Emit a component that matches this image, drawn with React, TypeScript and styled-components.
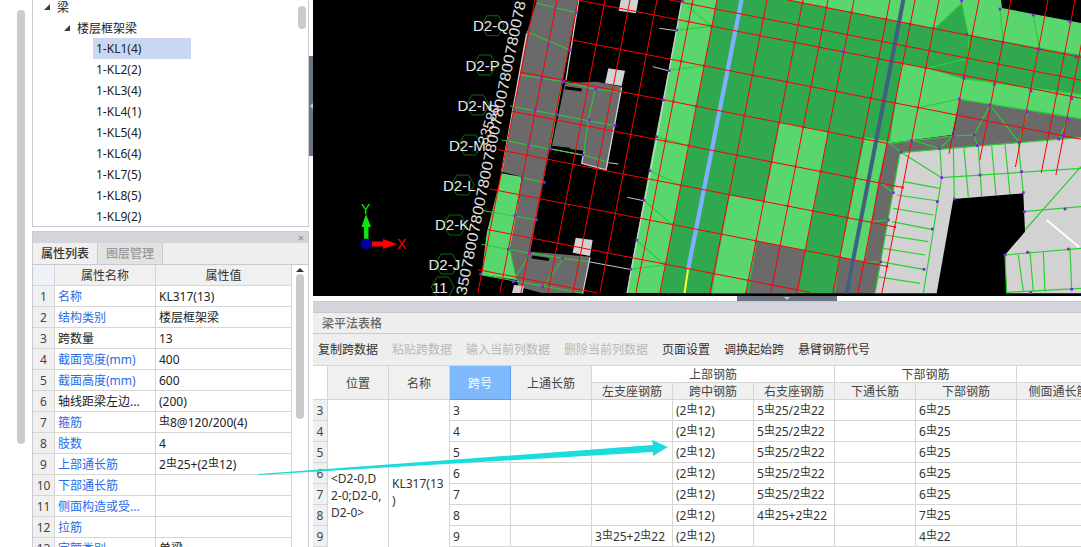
import React from "react";
import styled, { createGlobalStyle } from "styled-components";

const Global = createGlobalStyle`
  html, body { margin: 0; padding: 0; background: #fff; overflow: hidden; }
`;

const Page = styled.div`
  position: relative;
  display: flex;
  width: 1081px;
  height: 547px;
  overflow: hidden;
  background: #fff;
  font-family: "Noto Sans", "Noto Sans CJK SC", sans-serif;
  font-size: 12px;
  color: #222;
`;

const Rail = styled.div`
  flex: 0 0 32px;
  padding: 10px 7px 0 17px;
  box-sizing: border-box;
`;
const RailThumb = styled.div`
  width: 8px;
  height: 434px;
  background: #cbcbcb;
  border-radius: 4px;
`;
const LeftColumn = styled.div`
  flex: 0 0 277px;
  display: flex;
  flex-direction: column;
  gap: 4px;
`;
const TreePanel = styled.div`
  position: relative;
  height: 227px;
  box-sizing: border-box;
  border: 1px solid #c9c9cf;
  border-top: 0;
  overflow: hidden;
`;
const TreeList = styled.div`
  display: flex;
  flex-direction: column;
  margin-top: -4px;
`;
const TreeRow = styled.div<{ $depth: number }>`
  display: flex;
  align-items: center;
  gap: 7px;
  height: 21px;
  padding-left: ${(p) => 11 + p.$depth * 20}px;
`;
const Wedge = styled.span`
  width: 0;
  height: 0;
  border-left: 6px solid transparent;
  border-bottom: 6px solid #3c3c3c;
`;
const Leaf = styled.div<{ $selected?: boolean }>`
  width: 98px;
  height: 21px;
  line-height: 21px;
  margin-left: 60px;
  padding-left: 3px;
  box-sizing: border-box;
  background: ${(p) => (p.$selected ? "#c9d8f0" : "transparent")};
`;
const TreeThumb = styled.div`
  position: absolute;
  top: 6px;
  right: 2px;
  width: 8px;
  height: 23px;
  border-radius: 4px;
  background: #cbcbcb;
`;
const PropPanel = styled.div`
  flex: 1;
  display: flex;
  flex-direction: column;
  box-sizing: border-box;
  border: 1px solid #c9c9cf;
  border-bottom: 0;
  overflow: hidden;
`;
const PanelBar = styled.div`
  display: flex;
  align-items: center;
  justify-content: flex-end;
  height: 11px;
  padding-right: 4px;
  background: #d4d5da;
  color: #8b8b8b;
  font-size: 11px;
  line-height: 11px;
`;
const Tabs = styled.div`
  display: flex;
  height: 22px;
  background: #eee;
  border-bottom: 1px solid #c9c9cf;
  box-sizing: border-box;
`;
const Tab = styled.div<{ $active?: boolean }>`
  width: 65px;
  line-height: 21px;
  text-align: center;
  box-sizing: border-box;
  border-right: 1px solid #c9c9cf;
  background: ${(p) => (p.$active ? "#f0f0f0" : "#e2e2e2")};
  color: ${(p) => (p.$active ? "#333" : "#999")};
  font-weight: 500;
`;
const PropBody = styled.div`
  display: flex;
  flex: 1;
  overflow: hidden;
`;
const PropGrid = styled.div`
  display: grid;
  grid-template-columns: 22px 101px 136px;
  grid-auto-rows: 21px;
  flex: 0 0 259px;
`;
const PropHead = styled.div<{ $corner?: boolean }>`
  display: flex;
  align-items: center;
  justify-content: center;
  box-sizing: border-box;
  border-right: 1px solid #d6d6d6;
  border-bottom: 1px solid #d6d6d6;
  background: ${(p) => (p.$corner ? "#eef2f8" : "#f0f0f0")};
  color: #333;
`;
const PropIndex = styled(PropHead)`
  background: #f0f0f0;
  font-size: 12px;
  color: #444;
`;
const PropCell = styled.div<{ $link?: boolean }>`
  padding-left: 3px;
  line-height: 21px;
  white-space: nowrap;
  overflow: hidden;
  box-sizing: border-box;
  border-right: 1px solid #d6d6d6;
  border-bottom: 1px solid #d6d6d6;
  color: ${(p) => (p.$link ? "#2a6be8" : "#222")};
`;
const PropScroll = styled.div`
  position: relative;
  flex: 1;
`;
const ScrollUp = styled.div`
  position: absolute;
  top: 3px;
  left: 4px;
  width: 0;
  height: 0;
  border-left: 4px solid transparent;
  border-right: 4px solid transparent;
  border-bottom: 4px solid #333;
`;
const ScrollThumb = styled.div`
  position: absolute;
  top: 9px;
  left: 4px;
  width: 8px;
  height: 145px;
  border-radius: 4px;
  background: #cbcbcb;
`;
const Gutter = styled.div`
  position: relative;
  flex: 0 0 4px;
`;
const GutterHandle = styled.div`
  position: absolute;
  top: 56px;
  left: 0;
  width: 4px;
  height: 100px;
  background: #6b7583;
  &::after {
    content: "";
    position: absolute;
    top: 47px;
    left: 1px;
    border-top: 3px solid transparent;
    border-bottom: 3px solid transparent;
    border-right: 3px solid #c4c8ce;
  }
`;
const RightColumn = styled.div`
  flex: 1;
  display: flex;
  flex-direction: column;
  min-width: 0;
`;
const CanvasFrame = styled.div`
  height: 296px;
  background: #000;
  overflow: hidden;
`;
const Splitter = styled.div`
  height: 5px;
  padding-left: 424px;
  background: #fff;
`;
const SplitHandle = styled.div`
  position: relative;
  width: 100px;
  height: 5px;
  background: #6b7583;
  &::after {
    content: "";
    position: absolute;
    top: 1px;
    left: 47px;
    border-left: 3px solid transparent;
    border-right: 3px solid transparent;
    border-top: 3px solid #c4c8ce;
  }
`;
const BottomPanel = styled.div`
  flex: 1;
  display: flex;
  flex-direction: column;
  overflow: hidden;
`;
const BottomBar = styled.div`
  height: 10px;
  background: #d4d5da;
  border-top: 1px solid #c9c9cf;
`;
const TitleBar = styled.div`
  height: 22px;
  line-height: 22px;
  padding-left: 9px;
  background: #eee;
  border-top: 1px solid #c9c9cf;
  border-bottom: 1px solid #c9c9cf;
  color: #666;
  font-weight: 500;
  box-sizing: border-box;
`;
const Toolbar = styled.div`
  display: flex;
  gap: 14px;
  height: 31px;
  line-height: 31px;
  padding-left: 5px;
  background: #eee;
  box-sizing: border-box;
`;
const Tool = styled.span<{ $disabled?: boolean }>`
  color: ${(p) => (p.$disabled ? "#b8b8b8" : "#333")};
`;
const BeamGrid = styled.div`
  display: grid;
  grid-template-columns: 15px 61px 61px 61px 81px 81px 81px 81px 81px 101px 84px;
  grid-template-rows: 17px 17px repeat(7, 21px);
  width: 768px;
  overflow: hidden;
  background: #fff;
  border-top: 1px solid #d6d6d6;
`;
const Head = styled.div<{ $col: string; $row: string; $accent?: boolean; $plain?: boolean }>`
  grid-column: ${(p) => p.$col};
  grid-row: ${(p) => p.$row};
  display: flex;
  align-items: center;
  justify-content: center;
  white-space: nowrap;
  box-sizing: border-box;
  border-right: 1px solid ${(p) => (p.$accent ? "#5ba0f0" : "#d6d6d6")};
  border-bottom: 1px solid ${(p) => (p.$accent ? "#5ba0f0" : "#d6d6d6")};
  background: ${(p) => (p.$accent ? "#7fb8fb" : p.$plain ? "#fff" : "#f0f0f0")};
  color: ${(p) => (p.$accent ? "#fff" : "#444")};
`;
const RowNo = styled.div<{ $row: number }>`
  grid-column: 1;
  grid-row: ${(p) => p.$row};
  display: flex;
  align-items: center;
  justify-content: center;
  background: #f0f0f0;
  color: #444;
  box-sizing: border-box;
  border-right: 1px solid #d6d6d6;
  border-bottom: 1px solid #d6d6d6;
`;
const Merged = styled.div<{ $col: number; $top: number }>`
  grid-column: ${(p) => p.$col};
  grid-row: 3 / 10;
  padding: ${(p) => p.$top}px 0 0 3px;
  line-height: 17px;
  white-space: nowrap;
  box-sizing: border-box;
  border-right: 1px solid #d6d6d6;
  color: #333;
`;
const Cell = styled.div<{ $row: number; $col: number }>`
  grid-column: ${(p) => p.$col};
  grid-row: ${(p) => p.$row};
  padding-left: 3px;
  line-height: 21px;
  white-space: nowrap;
  overflow: hidden;
  box-sizing: border-box;
  border-right: 1px solid #d6d6d6;
  border-bottom: 1px solid #d6d6d6;
  color: #333;
`;
const Bar = styled.span`
  font-size: 11px;
  position: relative;
  top: -2px;
  line-height: 1;
`;
const Arrow = styled.svg`
  position: absolute;
  left: 0;
  top: 0;
  pointer-events: none;
`;

const rebar = (s: string) =>
  s.split("#").map((part, i) => (
    <React.Fragment key={i}>
      {i > 0 && <Bar>虫</Bar>}
      {part}
    </React.Fragment>
  ));

const leaves = ["1-KL1(4)", "1-KL2(2)", "1-KL3(4)", "1-KL4(1)", "1-KL5(4)", "1-KL6(4)", "1-KL7(5)", "1-KL8(5)", "1-KL9(2)"];

const props: [string, string, boolean][] = [
  ["名称", "KL317(13)", true],
  ["结构类别", "楼层框架梁", true],
  ["跨数量", "13", false],
  ["截面宽度(mm)", "400", true],
  ["截面高度(mm)", "600", true],
  ["轴线距梁左边...", "(200)", false],
  ["箍筋", "#8@120/200(4)", true],
  ["肢数", "4", true],
  ["上部通长筋", "2#25+(2#12)", true],
  ["下部通长筋", "", true],
  ["侧面构造或受...", "", true],
  ["拉筋", "", true],
  ["定额类别", "单梁", true],
];

const beamRows: [string, string, string, string][] = [
  ["3", "", "5#25/2#22", "6#25"],
  ["4", "", "5#25/2#22", "6#25"],
  ["5", "", "5#25/2#22", "6#25"],
  ["6", "", "5#25/2#22", "6#25"],
  ["7", "", "5#25/2#22", "6#25"],
  ["8", "", "4#25+2#22", "7#25"],
  ["9", "3#25+2#22", "", "4#22"],
];

const tools: [string, boolean][] = [
  ["复制跨数据", false],
  ["粘贴跨数据", true],
  ["输入当前列数据", true],
  ["删除当前列数据", true],
  ["页面设置", false],
  ["调换起始跨", false],
  ["悬臂钢筋代号", false],
];

/* ---- CAD drawing ---- */
const K = 0.195;
const BOTTOM = 293;
const familyA: [number, number][] = [
  [535, BOTTOM], [557, BOTTOM], [578, BOTTOM], [605, BOTTOM], [630, BOTTOM], [657, BOTTOM], [693, BOTTOM],
  [717, BOTTOM], [767, BOTTOM], [803, BOTTOM], [828, BOTTOM], [854, BOTTOM], [890, BOTTOM], [915, BOTTOM],
  [939, BOTTOM], [979, 154], [1011, 160], [1048, 167], [1075, 173], [1090, 175],
];
const familyB: [number, number, number][] = [
  [-19, 787, 1081], [4, 669, 1081], [22, 580, 1081], [63, 572, 1081], [105, 520, 887], [146, 512, 903],
  [187, 498, 895], [228, 490, 888], [269, 487, 810], [311, 478, 597],
];
const crossings = () => {
  const out: [number, number][] = [];
  familyA.forEach(([a, end]) =>
    familyB.forEach(([b, s, e]) => {
      const y = (b + K * (a - 690)) / (1 + K * K);
      const x = a - K * y;
      if (x > 660 && x >= s && x <= e && y <= end && y > 0) out.push([x, y]);
    })
  );
  return out;
};

const GREEN = "#2ad02f";
type Seg = number[];
const Lines = ({ segs, color = GREEN, w = 3 }: { segs: Seg[]; color?: string; w?: number }) => (
  <>
    {segs.map((s, i) => (
      <polyline key={i} points={s.join(",")} fill="none" stroke={color} strokeWidth={w} />
    ))}
  </>
);
const Dots = ({ pts }: { pts: Seg[] }) => (
  <>
    {pts.map(([x, y], i) => (
      <rect key={i} x={x - 4} y={y - 4} width={8} height={8} fill="#8a1be8" />
    ))}
  </>
);

const z5Green: Seg[] = [
  [680, 10, 800, 38], [650, 95, 780, 150], [630, 225, 760, 245, 855, 268, 935, 275], [600, 318, 915, 377],
  [575, 420, 720, 447, 820, 465, 890, 485], [635, 533, 703, 547], [520, 632, 680, 660], [515, 733, 660, 760, 760, 775, 835, 785],
  [515, 825, 820, 880], [855, 270, 835, 360, 820, 465], [757, 245, 720, 447], [610, 845, 660, 760], [700, 860, 760, 775],
  [600, 750, 620, 840],
];
const z5Dots: Seg[] = [
  [735, 25], [800, 38], [715, 135], [780, 150], [695, 235], [760, 245], [857, 268], [675, 330], [742, 343], [838, 360], [915, 377],
  [655, 435], [720, 447], [818, 465], [637, 535], [703, 547], [615, 647], [680, 660], [595, 748], [660, 760], [758, 775], [610, 845],
  [698, 860], [512, 822], [1100, 90], [1077, 212], [1060, 300], [1040, 410], [1020, 512], [1002, 600], [980, 720], [962, 808], [1117, 3],
];
const z6Green: Seg[] = [
  [630, 458, 555, 880], [630, 458, 1173, 412], [755, 533, 1173, 505], [750, 445, 755, 533, 700, 880],
  [790, 440, 793, 595], [822, 445, 835, 590], [865, 440, 875, 588], [905, 438, 918, 585], [945, 432, 960, 582], [985, 430, 1000, 580],
  [640, 545, 750, 565], [620, 585, 745, 603], [610, 625, 730, 645], [605, 665, 725, 688], [585, 705, 715, 725], [580, 745, 705, 765],
  [570, 785, 700, 808], [560, 830, 690, 850], [1000, 635, 1173, 620], [945, 765, 1173, 745], [950, 877, 1173, 865],
  [985, 765, 1000, 875], [1020, 755, 1030, 875], [1060, 755, 1065, 875], [1140, 745, 1145, 870], [1005, 690, 1173, 500],
  [945, 765, 950, 880],
  [665, 420, 748, 445, 790, 408, 853, 405, 862, 437], [853, 405, 900, 315, 987, 427, 1012, 335], [1107, 417, 1133, 358],
  [600, 430, 633, 457, 755, 533], [570, 547, 610, 578], [547, 665, 595, 660], [523, 787, 572, 785],
  [735, 85, 815, 10, 835, 105, 835, 175], [930, 27, 940, 128], [1030, 45, 1048, 147], [710, 205, 833, 175], [690, 322, 808, 297],
  [815, 235, 1173, 285], [810, 298, 1173, 355], [938, 128, 1173, 165], [600, 430, 790, 408],
];
const z6Dots: Seg[] = [
  [815, 3], [930, 27], [1030, 45], [1140, 65], [1158, 170], [938, 128], [1048, 147], [830, 103], [460, 155], [822, 235], [913, 253],
  [1023, 273], [1145, 296], [808, 297], [900, 315], [1012, 335], [1133, 358], [853, 405], [790, 408], [862, 437], [987, 427], [1107, 417],
  [1120, 407], [748, 445], [665, 422], [633, 457], [755, 533], [870, 525], [995, 515], [610, 578], [742, 605], [595, 660], [727, 687],
  [572, 785], [702, 808], [1000, 578], [793, 597], [1003, 635], [1125, 627], [945, 765], [1013, 757], [1135, 747], [1022, 878], [1145, 868],
];

const gridLabels: [string, number, number, number, number][] = [
  ["D2-Q", 473, 31, 492.7, 25.7],
  ["D2-P", 465.5, 71, 485, 65],
  ["D2-N", 457.5, 111, 477.7, 105],
  ["D2-M", 449, 151, 470, 145],
  ["D2-L", 443, 191, 462.7, 185],
  ["D2-K", 435, 230, 455, 225],
  ["D2-J", 428.5, 270, 446.7, 264],
  ["11", 432, 293, 442.7, 287],
];
const hex = (cx: number, cy: number, r = 11.5) =>
  [0, 1, 2, 3, 4, 5]
    .map((i) => {
      const a = (Math.PI / 3) * i;
      return `${cx + r * Math.cos(a)},${cy + r * Math.sin(a)}`;
    })
    .join(" ");

const CadDrawing = () => (
  <svg width={768} height={296} viewBox="313 0 768 296" style={{ display: "block" }} fontFamily='"DejaVu Sans", sans-serif'>
    <rect x={313} y={0} width={768} height={296} fill="#000" />
    <g transform="translate(310,0) scale(0.33333)">
      <polygon fill="#5ad66e" points="575,520 635,530 620,650 600,750 620,840 515,825 530,700" />
      <polygon fill="#6a6a6a" points="678,10 680,0 805,0 697,560 660,760 600,750 628,590 635,530 575,515 650,100" />
      <polygon fill="#6a6a6a" points="765,250 860,245 935,260 890,510 815,490 822,452 725,440" />
      <polygon fill="#6a6a6a" points="600,750 840,770 815,879 695,879 625,860" />
      <polygon fill="#d2d2d2" points="895,205 945,212 935,258 885,250" />
      <polygon fill="#d2d2d2" points="932,0 985,0 978,40 926,32" />
      <polygon fill="#d2d2d2" points="797,713 848,720 840,768 788,758" />
      <polygon fill="#d2d2d2" points="612,855 642,858 638,879 606,879" />
      <rect x={765} y={262} width={50} height={9} fill="#000" transform="rotate(8 790 266)" />
      <rect x={726} y={440} width={54} height={11} fill="#000" transform="rotate(6 750 445)" />
      <rect x={665} y={770} width={52} height={9} fill="#000" transform="rotate(8 690 775)" />
      <Lines color="#d0d0d0" w={4} segs={[[806, 0, 768, 240], [935, 262, 888, 510, 815, 490, 822, 455], [840, 772, 818, 879], [650, 100, 575, 515]]} />
      <Lines color="#c8c8c8" w={3} segs={[[1048, 85, 1100, 92], [1028, 200, 1075, 212], [952, 592, 1000, 602], [725, 447, 815, 465], [835, 785, 960, 808], [895, 488, 925, 492]]} />
      <Lines segs={z5Green} />
    </g>
    <polygon fill="#5ad66e" points="682,0 1001,0 1002,8 1081,23 1081,120 960,100 952,135 890,143 865,262 835,293 627,293 630,273 653,150" />
    <Lines color="#cfcfcf" w={1.3} segs={[[682, 0, 655, 148, 635, 250, 627, 293]]} />
    <g transform="translate(690,0) scale(0.33333)">
      <polygon
        fill="#2fa84f"
        points="81,0 300,0 340,8 590,57 735,85 815,10 835,105 1173,165 1173,282 815,235 710,205 635,190 600,425 525,412 500,530 450,772 435,880 -90,880"
      />
      <polygon
        fill="#5ad66e"
        points="270,367 415,395 393,513 370,632 345,750 272,738 200,723 177,843 165,880 65,880 75,823 97,703 120,585 223,605 247,485"
      />
      <polygon fill="#6a6a6a" points="600,430 635,458 555,880 435,880 450,770 525,785 565,545 590,430" />
      <polygon fill="#6a6a6a" points="200,723 345,752 325,880 178,880" />
      <polygon fill="#6a6a6a" points="810,298 1173,358 1173,412 630,458 600,430 790,405" />
      <polygon
        fill="#d2d2d2"
        points="630,458 1173,412 1173,880 950,880 945,765 1005,695 1000,580 790,597 740,880 555,880"
      />
      <Lines color="#41607f" w={12} segs={[[640, 0, 470, 880]]} />
      <Lines segs={z6Green} w={3.5} />
      <Lines color="#fff" w={6} segs={[[1070, 660, 1168, 742]]} />
    </g>
    <g transform="translate(630,0) scale(0.33333)">
      <Lines segs={[[175, 20, 243, 78], [140, 90, 243, 80], [117, 210, 220, 198], [78, 410, 175, 437]]} w={3.5} />
    </g>
    <g transform="translate(630,150) scale(0.33333)">
      <Lines segs={[[60, 62, 150, 105], [40, 150, 128, 225], [18, 270, 105, 345], [0, 358, 105, 345]]} w={3.5} />
    </g>
    <line x1={741.5} y1={0} x2={688} y2={270} stroke="#7fb0ff" strokeWidth={4.2} />
    <line x1={688} y1={270} x2={684.5} y2={293} stroke="#ffff33" strokeWidth={2} />
    {familyA.map(([a, end]) => (
      <line key={a} x1={a} y1={0} x2={a - K * end} y2={end} stroke="#f00" strokeWidth={1} />
    ))}
    {familyB.map(([b, s, e]) => {
      const y = (x: number) => b + K * (x - 690);
      return <line key={b} x1={s} y1={y(s)} x2={e} y2={Math.min(y(e), 293)} stroke="#f00" strokeWidth={1} />;
    })}
    {crossings().map(([x, y], i) => (
      <circle key={i} cx={x} cy={y} r={1.4} fill="#e0163c" />
    ))}
    <g transform="translate(310,0) scale(0.33333)">
      <Dots pts={z5Dots} />
    </g>
    <g transform="translate(690,0) scale(0.33333)">
      <Dots pts={z6Dots} />
    </g>
    {gridLabels.map(([t, x, y, cx, cy]) => (
      <g key={t}>
        <polygon points={hex(cx, cy)} fill="none" stroke="#0c6a0c" strokeWidth={1} />
        <text x={x} y={y} fill="#e8e8e8" fontSize={15} fontFamily='"Liberation Sans", sans-serif'>
          {t}
        </text>
      </g>
    ))}
    <text transform="translate(466,296) rotate(-78.5)" fill="#e0e0e0" fontSize={15} fontFamily='"Liberation Sans", sans-serif' textLength={300} lengthAdjust="spacingAndGlyphs">
      350780078007800780078007800780078
    </text>
    <text transform="translate(487,146) rotate(-72)" fill="#dcdcdc" fontSize={15} fontFamily='"Liberation Sans", sans-serif'>
      33580
    </text>
    <polygon points="366,214 361.5,227 364,227 364,240 368.5,240 368.5,227 371,227" fill="#0ee60e" />
    <polygon points="372,241.5 383,241.5 383,239 397,244 383,249 383,246.5 372,246.5" fill="#f00" />
    <circle cx={366} cy={244} r={5.5} fill="#0000a0" />
    <text x={361} y={214} fill="#0ee60e" fontSize={14} fontFamily='"Liberation Sans", sans-serif'>Y</text>
    <text x={397} y={249} fill="#f00" fontSize={14} fontFamily='"Liberation Sans", sans-serif'>X</text>
  </svg>
);

export default function App() {
  return (
    <Page>
      <Global />
      <Rail>
        <RailThumb />
      </Rail>
      <LeftColumn>
        <TreePanel>
          <TreeList>
            <TreeRow $depth={0}>
              <Wedge />
              <span>梁</span>
            </TreeRow>
            <TreeRow $depth={1}>
              <Wedge />
              <span>楼层框架梁</span>
            </TreeRow>
            {leaves.map((l, i) => (
              <Leaf key={l} $selected={i === 0}>
                {l}
              </Leaf>
            ))}
          </TreeList>
          <TreeThumb />
        </TreePanel>
        <PropPanel>
          <PanelBar>×</PanelBar>
          <Tabs>
            <Tab $active>属性列表</Tab>
            <Tab>图层管理</Tab>
          </Tabs>
          <PropBody>
            <PropGrid>
              <PropHead $corner />
              <PropHead>属性名称</PropHead>
              <PropHead>属性值</PropHead>
              {props.map(([name, value, link], i) => (
                <React.Fragment key={name}>
                  <PropIndex>{i + 1}</PropIndex>
                  <PropCell $link={link}>{name}</PropCell>
                  <PropCell>{rebar(value)}</PropCell>
                </React.Fragment>
              ))}
            </PropGrid>
            <PropScroll>
              <ScrollUp />
              <ScrollThumb />
            </PropScroll>
          </PropBody>
        </PropPanel>
      </LeftColumn>
      <Gutter>
        <GutterHandle />
      </Gutter>
      <RightColumn>
        <CanvasFrame>
          <CadDrawing />
        </CanvasFrame>
        <Splitter>
          <SplitHandle />
        </Splitter>
        <BottomPanel>
          <BottomBar />
          <TitleBar>梁平法表格</TitleBar>
          <Toolbar>
            {tools.map(([t, d]) => (
              <Tool key={t} $disabled={d}>
                {t}
              </Tool>
            ))}
          </Toolbar>
          <BeamGrid>
            <Head $col="1" $row="1 / 3" $plain />
            <Head $col="2" $row="1 / 3">位置</Head>
            <Head $col="3" $row="1 / 3">名称</Head>
            <Head $col="4" $row="1 / 3" $accent>跨号</Head>
            <Head $col="5" $row="1 / 3">上通长筋</Head>
            <Head $col="6 / 9" $row="1" $plain>上部钢筋</Head>
            <Head $col="9 / 11" $row="1" $plain>下部钢筋</Head>
            <Head $col="11" $row="1" $plain />
            <Head $col="6" $row="2">左支座钢筋</Head>
            <Head $col="7" $row="2">跨中钢筋</Head>
            <Head $col="8" $row="2">右支座钢筋</Head>
            <Head $col="9" $row="2">下通长筋</Head>
            <Head $col="10" $row="2">下部钢筋</Head>
            <Head $col="11" $row="2">侧面通长筋</Head>
            <Merged $col={2} $top={70}>
              {"<D2-0,D"}
              <br />
              {"2-0;D2-0,"}
              <br />
              {"D2-0>"}
            </Merged>
            <Merged $col={3} $top={75}>
              KL317(13
              <br />)
            </Merged>
            {beamRows.map(([no, left, right, low], i) => {
              const r = i + 3;
              return (
                <React.Fragment key={no}>
                  <RowNo $row={r}>{no}</RowNo>
                  <Cell $row={r} $col={4}>{no}</Cell>
                  <Cell $row={r} $col={5} />
                  <Cell $row={r} $col={6}>{rebar(left)}</Cell>
                  <Cell $row={r} $col={7}>{rebar("(2#12)")}</Cell>
                  <Cell $row={r} $col={8}>{rebar(right)}</Cell>
                  <Cell $row={r} $col={9} />
                  <Cell $row={r} $col={10}>{rebar(low)}</Cell>
                  <Cell $row={r} $col={11} />
                </React.Fragment>
              );
            })}
          </BeamGrid>
        </BottomPanel>
      </RightColumn>
      <Arrow width={1081} height={547} viewBox="0 0 1081 547">
        <polygon points="258,474 653,445 652,440 668,447 653,456 653,452 258,475" fill="#1adcdc" />
      </Arrow>
    </Page>
  );
}
